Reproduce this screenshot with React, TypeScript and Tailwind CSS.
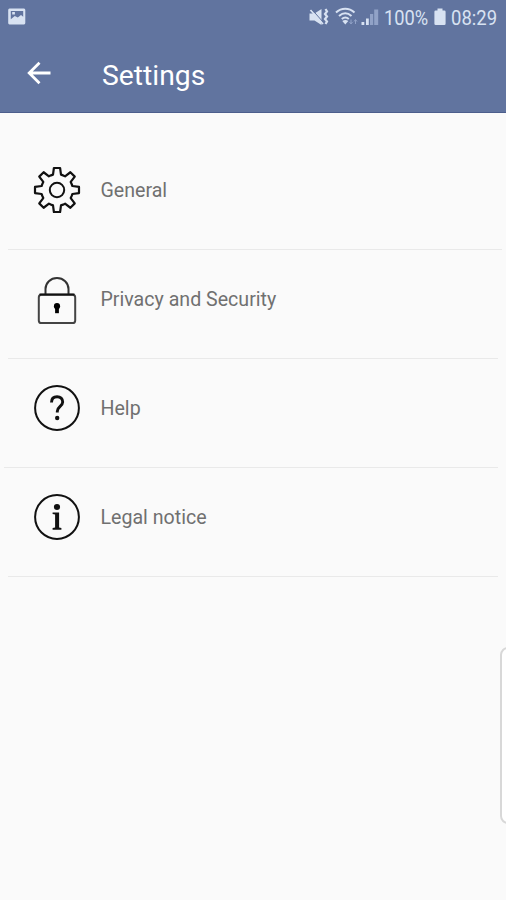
import type { ReactNode } from "react";

// Outline of an eight-toothed cog, centred on 0,0.
function cogPath(): string {
  const pts: string[] = [];
  for (let i = 0; i < 8; i++) {
    const a = (i * Math.PI) / 4;
    const at = (x: number, y: number) =>
      `${(x * Math.cos(a) - y * Math.sin(a)).toFixed(2)} ${(x * Math.sin(a) + y * Math.cos(a)).toFixed(2)}`;
    pts.push(`${i === 0 ? "M" : "L"}${at(-4, -15.4)}`);
    pts.push(`L${at(-3.1, -22)}`, `L${at(3.1, -22)}`, `L${at(4, -15.4)}`);
    pts.push(`L${at(6.1, -14.6)}`);
  }
  return pts.join(" ") + "Z";
}

function Icon({ children }: { children: ReactNode }) {
  return (
    <svg viewBox="-24 -24 48 48" className="h-12 w-12 shrink-0 overflow-visible" fill="none" stroke="#111" strokeWidth="2">
      {children}
    </svg>
  );
}

const GearIcon = () => (
  <Icon>
    <path d={cogPath()} strokeLinejoin="round" strokeWidth="2.2" />
    <circle r="7.2" />
  </Icon>
);

const LockIcon = () => (
  <Icon>
    <path d="M-11.5-4.500v-5.500a11.500 11 0 0 1 23 0v5.500" stroke="#333" />
    <rect x="-18.200" y="-4.200" width="36.400" height="28.200" rx="2.600" stroke="#444" />
    <path d="M-17.500-4.400h35" />
    <circle cy="7.200" r="3.100" fill="#000" stroke="none" />
    <path d="M-1.900 7h3.800v7.200h-3.800z" fill="#000" stroke="none" />
  </Icon>
);

const HelpIcon = () => (
  <Icon>
    <circle r="21.900" />
    <path d="M-5.500-5.600C-5.500-9.500-3.300-11.300.1-11.300s5.600 2 5.600 5.400C5.700-1.700.3-1.400.3 3.300v1.200" strokeWidth="2.900" />
    <circle cx=".2" cy="10" r="2.200" fill="#111" stroke="none" />
  </Icon>
);

const InfoIcon = () => (
  <Icon>
    <circle r="21.900" />
    <circle cy="-10" r="3.100" fill="#111" stroke="none" />
    <path d="M-4.400-4.600H2.100V10.500L4.400 11V12.800H-4.400V11L-1.900 10.500V-2.400L-4.400-3Z" fill="#111" stroke="none" />
  </Icon>
);

const items = [
  { label: "General", icon: <GearIcon />, line: "ml-2 mr-1" },
  { label: "Privacy and Security", icon: <LockIcon />, line: "ml-2 mr-2" },
  { label: "Help", icon: <HelpIcon />, line: "ml-1 mr-2" },
  { label: "Legal notice", icon: <InfoIcon />, line: "ml-2 mr-2" },
];

function StatusBar() {
  return (
    <div className="flex h-9 items-start justify-between pl-2 text-[#d8e2f2]">
      <svg viewBox="0 0 18 18" className="mt-2 h-[18px] w-[18px]">
        <path
          fillRule="evenodd"
          fill="currentColor"
          d="M1.5.5h14.5a1.5 1.5 0 0 1 1.3 1.5v13a1.5 1.5 0 0 1-1.3 1.5H1.500A1.500 1.500 0 0 1 .2 15V2A1.500 1.500 0 0 1 1.500.5ZM2.800 3v8.300l4-3.400 3 1.600 3.200-2.600 2.200 1.800V3ZM4.200 4h2.700v2.600H4.200Z"
        />
      </svg>
      <div className="flex items-start">
        <svg viewBox="308 6 75 22" className="mt-1.5 h-[22px] w-[75px]" fill="none" stroke="currentColor">
          <path d="M309.500 13.500h5l7-4.500v16l-7-4.500h-5z" fill="currentColor" stroke="none" />
          <path d="m310.500 10 12.500 14" strokeWidth="1.800" />
          <path d="m312 9.500 11 12.500" stroke="#61749f" strokeWidth="1" />
          <path d="m325.500 9 1.500 2.500-2 2.500 2 2.500-2 2.500 2 2.500-1.500 2.500" strokeWidth="2.200" />
          <path d="M336 12.500c5.500-5 13-5 18.500 0M339 16c4-3.500 8.500-3.500 12.500 0M341.800 19c2.300-2 4.700-2 7 0" strokeWidth="2" />
          <path d="m345.300 24.500-3-3.500c2-1.500 4-1.500 6 0z" fill="currentColor" stroke="none" />
          <path d="M351 19.500v4m-1.500-1.500 1.500 2 1.500-2M355.500 24v-4m-1.500 1.500 1.500-2 1.500 2" stroke="#91a2c7" />
          <path d="M361.500 22h2.800v3h-2.800zM366 18.500h2.800V25H366z" fill="currentColor" stroke="none" />
          <path d="M370 14h3.200v11H370zM374.200 9.500h4V25h-4z" fill="#91a2c7" stroke="none" />
        </svg>
        <div className="mt-[5px] ml-px w-[50px]">
          <span className="inline-block origin-left scale-x-[0.87] whitespace-nowrap text-[21px] leading-[26px]">100%</span>
        </div>
        <svg viewBox="0 0 12 18" className="mt-2 mr-[5px] h-[18px] w-3" fill="currentColor">
          <path d="M3.500.5h5v2h1.800a1.300 1.300 0 0 1 1.300 1.300v11.900a1.300 1.300 0 0 1-1.300 1.300H1.700A1.300 1.300 0 0 1 .4 15.700V3.800a1.300 1.300 0 0 1 1.300-1.300h1.800z" />
        </svg>
        <div className="mt-[5px] w-[55px]">
          <span className="inline-block origin-left scale-x-[0.88] whitespace-nowrap text-[21px] leading-[26px]">08:29</span>
        </div>
      </div>
    </div>
  );
}

export default function App() {
  return (
    <div className="relative h-[900px] w-[506px] overflow-hidden bg-[#fafafa] font-['Roboto',sans-serif]">
      <header className="h-[113px] border-b border-[#4c5e8c] bg-[#61749f]">
        <StatusBar />
        <div className="flex h-[76px] items-center pl-[27px] text-white">
          <svg viewBox="0 0 24 24" className="-mt-[3px] h-6 w-6" fill="none" stroke="currentColor" strokeWidth="2.800">
            <path d="M23.500 12H2M12.500 1.700 2.200 12l10.300 10.300" />
          </svg>
          <h1 className="mt-[3px] ml-[51px] text-[28.300px] leading-8 font-normal">Settings</h1>
        </div>
      </header>
      <ul className="pt-[28px]">
        {items.map((item) => (
          <li key={item.label}>
            <div className="flex h-[108px] items-center pb-2.5 pl-[33px]">
              {item.icon}
              <span className="mt-0.5 ml-[19.500px] text-[19.600px] leading-6 text-[#707070]">{item.label}</span>
            </div>
            <div className={`h-px bg-[#e9e9e9] ${item.line}`} />
          </li>
        ))}
      </ul>
      <div className="absolute top-[647px] left-[500px] h-[177px] w-5 rounded-lg border-2 border-[#d8d8d8] bg-white" />
    </div>
  );
}
